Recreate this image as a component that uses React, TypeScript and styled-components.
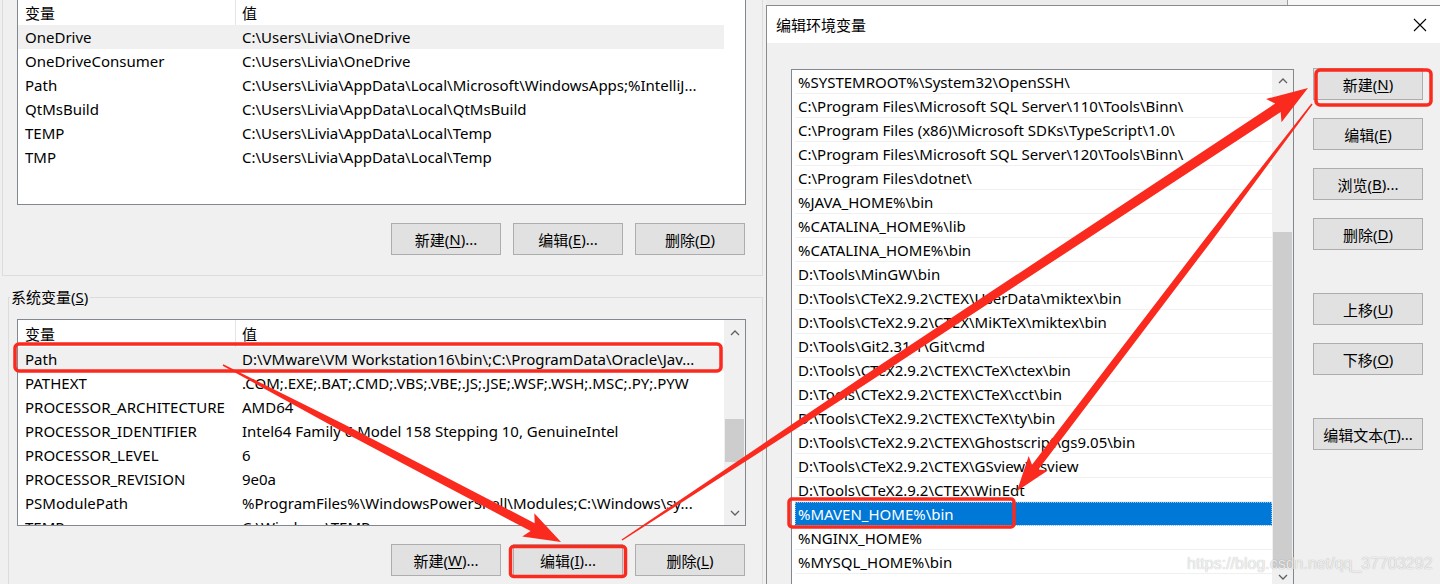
import React from "react";
import styled, { createGlobalStyle } from "styled-components";

const GlobalStyle = createGlobalStyle`
  html, body { margin: 0; padding: 0; background: #f0f0f0; }
  body { font-family: "Noto Sans", "Noto Sans CJK SC", sans-serif; color: #000; }
  * { box-sizing: border-box; }
`;

const Screen = styled.div`
  position: relative;
  width: 1440px;
  height: 584px;
  overflow: hidden;
  display: flex;
  background: #f0f0f0;
  font-size: 15px;
`;

const LeftPane = styled.div`
  width: 766px;
  flex: none;
  display: flex;
  flex-direction: column;
`;

const UserGroup = styled.div`
  margin: -1px 0 0 2px;
  width: 761px;
  border: 1px solid #dcdcdc;
  border-top: none;
  padding: 0 16px 20px 14px;
`;

const SysGroup = styled.div`
  margin: 21px 0 0 8px;
  width: 755px;
  border: 1px solid #dcdcdc;
  border-bottom: none;
  padding: 0 16px 0 8px;
  flex: 1;
`;

const GroupLabel = styled.div`
  width: fit-content;
  margin: -11px 0 0 -7px;
  padding: 0 2px 0 1px;
  line-height: 20px;
  height: 20px;
  background: #f0f0f0;
`;

const ListBox = styled.div<{ $h: number; $mt?: number }>`
  height: ${(p) => p.$h}px;
  margin-top: ${(p) => p.$mt ?? 0}px;
  border: 1px solid #828790;
  background: #fff;
  display: flex;
  overflow: hidden;
`;

const ListBody = styled.div`
  flex: 1;
  min-width: 0;
  overflow: hidden;
`;

const VarHeader = styled.div<{ $h: number }>`
  display: grid;
  grid-template-columns: 218px 1fr;
  height: ${(p) => p.$h}px;
  align-items: stretch;
`;

const HeadCell = styled.div<{ $first?: boolean }>`
  display: flex;
  align-items: center;
  padding-left: ${(p) => (p.$first ? 7 : 6)}px;
  border-right: ${(p) => (p.$first ? "1px solid #e5e5e5" : "none")};
  white-space: nowrap;
`;

const VarRow = styled.div<{ $sel?: boolean }>`
  display: grid;
  grid-template-columns: 218px 1fr;
  height: 24px;
  align-items: center;
  background: ${(p) => (p.$sel ? "#f0f0f0" : "transparent")};
`;

const Cell = styled.div<{ $first?: boolean }>`
  padding-left: ${(p) => (p.$first ? 7 : 6)}px;
  white-space: nowrap;
  overflow: hidden;
`;

const BlankCol = styled.div`
  width: 21px;
  flex: none;
`;

const ScrollCol = styled.div`
  width: 21px;
  flex: none;
  background: #f0f0f0;
  display: flex;
  flex-direction: column;
`;

const ScrollBtn = styled.div<{ $h: number }>`
  height: ${(p) => p.$h}px;
  flex: none;
  display: flex;
  align-items: center;
  justify-content: center;
`;

const Track = styled.div<{ $pt: number }>`
  flex: 1;
  display: flex;
  flex-direction: column;
  padding-top: ${(p) => p.$pt}px;
`;

const Thumb = styled.div<{ $h?: number }>`
  margin: 0 1px;
  background: #cdcdcd;
  ${(p) => (p.$h ? `height: ${p.$h}px;` : "flex: 1;")}
`;

const ButtonRow = styled.div<{ $mt: number }>`
  display: flex;
  justify-content: flex-end;
  gap: 12px;
  margin-top: ${(p) => p.$mt}px;
  padding-right: 1px;
`;

const WinButton = styled.div<{ $mt?: number }>`
  width: 110px;
  height: 32px;
  flex: none;
  margin-top: ${(p) => p.$mt ?? 0}px;
  background: #e1e1e1;
  border: 1px solid #adadad;
  display: flex;
  align-items: center;
  justify-content: center;
  white-space: nowrap;
  font-size: 15px;
  u { text-decoration-thickness: 1px; text-underline-offset: 2px; }
`;

const RightCol = styled.div`
  flex: 1;
  display: flex;
  flex-direction: column;
`;

const TopStrip = styled.div`
  height: 5px;
  flex: none;
  display: flex;
`;

const StripPart = styled.div<{ $w?: number; $line?: boolean }>`
  ${(p) => (p.$w ? `width: ${p.$w}px;` : "flex: 1;")}
  background: ${(p) => (p.$line ? "#f7f7f7" : "#ececec")};
  border-left: ${(p) => (p.$line ? "1px solid #a0a0a0" : "none")};
`;

const Dialog = styled.div`
  flex: 1;
  border-left: 1px solid #8a8a8a;
  border-top: 1px solid #8a8a8a;
  background: #f0f0f0;
  display: flex;
  flex-direction: column;
`;

const TitleBar = styled.div`
  height: 37px;
  flex: none;
  background: #fff;
  display: flex;
  align-items: center;
  justify-content: space-between;
  padding: 0 13px 0 9px;
  font-size: 15px;
`;

const DialogBody = styled.div`
  flex: 1;
  display: flex;
  padding: 25px 0 0 24px;
  gap: 19px;
`;

const PathList = styled.div`
  width: 503px;
  height: 517px;
  margin-top: 1px;
  border: 1px solid #828790;
  background: #fff;
  display: flex;
  flex: none;
`;

const PathBody = styled.div`
  flex: 1;
  min-width: 0;
  padding-left: 3px;
  overflow: hidden;
`;

const PathRow = styled.div<{ $sel?: boolean }>`
  height: 24px;
  display: flex;
  align-items: center;
  padding-left: 3px;
  white-space: nowrap;
  overflow: hidden;
  border-bottom: 1px solid #f0f0f0;
  background: ${(p) => (p.$sel ? "#0078d7" : "#fff")};
  color: ${(p) => (p.$sel ? "#fff" : "#000")};
  outline: ${(p) => (p.$sel ? "1px dotted #8fc3ee" : "none")};
  outline-offset: -1px;
`;

const ButtonCol = styled.div`
  width: 110px;
  flex: none;
  display: flex;
  flex-direction: column;
`;

const Watermark = styled.div`
  position: absolute;
  left: 1187px;
  top: 555px;
  font-family: "Liberation Sans", Arial, sans-serif;
  font-size: 16px;
  color: rgba(255, 255, 255, 0.8);
  text-shadow: 0 0 1px rgba(0, 0, 0, 0.35);
  white-space: nowrap;
  pointer-events: none;
`;

const Overlay = styled.svg`
  position: absolute;
  left: 0;
  top: 0;
  pointer-events: none;
`;

const Chevron = ({ up }: { up?: boolean }) => (
  <svg width="10" height="6" viewBox="0 0 10 6">
    <polyline
      points={up ? "1,5 5,1 9,5" : "1,1 5,5 9,1"}
      fill="none"
      stroke="#606060"
      strokeWidth="1.3"
    />
  </svg>
);

const CloseIcon = () => (
  <svg width="14" height="14" viewBox="0 0 14 14">
    <path d="M1 1 L13 13 M13 1 L1 13" stroke="#000" strokeWidth="1.1" />
  </svg>
);

const userVars: [string, string][] = [
  ["OneDrive", "C:\\Users\\Livia\\OneDrive"],
  ["OneDriveConsumer", "C:\\Users\\Livia\\OneDrive"],
  ["Path", "C:\\Users\\Livia\\AppData\\Local\\Microsoft\\WindowsApps;%IntelliJ..."],
  ["QtMsBuild", "C:\\Users\\Livia\\AppData\\Local\\QtMsBuild"],
  ["TEMP", "C:\\Users\\Livia\\AppData\\Local\\Temp"],
  ["TMP", "C:\\Users\\Livia\\AppData\\Local\\Temp"],
];

const sysVars: [string, string][] = [
  ["Path", "D:\\VMware\\VM Workstation16\\bin\\;C:\\ProgramData\\Oracle\\Jav..."],
  ["PATHEXT", ".COM;.EXE;.BAT;.CMD;.VBS;.VBE;.JS;.JSE;.WSF;.WSH;.MSC;.PY;.PYW"],
  ["PROCESSOR_ARCHITECTURE", "AMD64"],
  ["PROCESSOR_IDENTIFIER", "Intel64 Family 6 Model 158 Stepping 10, GenuineIntel"],
  ["PROCESSOR_LEVEL", "6"],
  ["PROCESSOR_REVISION", "9e0a"],
  ["PSModulePath", "%ProgramFiles%\\WindowsPowerShell\\Modules;C:\\Windows\\sy..."],
  ["TEMP", "C:\\Windows\\TEMP"],
];

const paths = [
  "%SYSTEMROOT%\\System32\\OpenSSH\\",
  "C:\\Program Files\\Microsoft SQL Server\\110\\Tools\\Binn\\",
  "C:\\Program Files (x86)\\Microsoft SDKs\\TypeScript\\1.0\\",
  "C:\\Program Files\\Microsoft SQL Server\\120\\Tools\\Binn\\",
  "C:\\Program Files\\dotnet\\",
  "%JAVA_HOME%\\bin",
  "%CATALINA_HOME%\\lib",
  "%CATALINA_HOME%\\bin",
  "D:\\Tools\\MinGW\\bin",
  "D:\\Tools\\CTeX2.9.2\\CTEX\\UserData\\miktex\\bin",
  "D:\\Tools\\CTeX2.9.2\\CTEX\\MiKTeX\\miktex\\bin",
  "D:\\Tools\\Git2.31.1\\Git\\cmd",
  "D:\\Tools\\CTeX2.9.2\\CTEX\\CTeX\\ctex\\bin",
  "D:\\Tools\\CTeX2.9.2\\CTEX\\CTeX\\cct\\bin",
  "D:\\Tools\\CTeX2.9.2\\CTEX\\CTeX\\ty\\bin",
  "D:\\Tools\\CTeX2.9.2\\CTEX\\Ghostscript\\gs9.05\\bin",
  "D:\\Tools\\CTeX2.9.2\\CTEX\\GSview\\gsview",
  "D:\\Tools\\CTeX2.9.2\\CTEX\\WinEdt",
  "%MAVEN_HOME%\\bin",
  "%NGINX_HOME%",
  "%MYSQL_HOME%\\bin",
  "",
];

function arrowPoints(
  x1: number, y1: number, x2: number, y2: number,
  w0: number, w1: number, hl: number, hw: number
) {
  const dx = x2 - x1, dy = y2 - y1, L = Math.hypot(dx, dy);
  const ux = dx / L, uy = dy / L, nx = -uy, ny = ux;
  const bx = x2 - ux * hl, by = y2 - uy * hl;
  const mx = x1 + dx * 0.35, my = y1 + dy * 0.35;
  const wm = w1 * 0.8;
  const p = (x: number, y: number) => `${x.toFixed(1)},${y.toFixed(1)}`;
  return [
    p(x1 + (nx * w0) / 2, y1 + (ny * w0) / 2),
    p(mx + (nx * wm) / 2, my + (ny * wm) / 2),
    p(bx + (nx * w1) / 2, by + (ny * w1) / 2),
    p(bx + (nx * hw) / 2 - ux * 5, by + (ny * hw) / 2 - uy * 5),
    p(x2, y2),
    p(bx - (nx * hw) / 2 - ux * 5, by - (ny * hw) / 2 - uy * 5),
    p(bx - (nx * w1) / 2, by - (ny * w1) / 2),
    p(mx - (nx * wm) / 2, my - (ny * wm) / 2),
    p(x1 - (nx * w0) / 2, y1 - (ny * w0) / 2),
  ].join(" ");
}

const RED = "#fb2a1e";

export default function App() {
  return (
    <>
      <GlobalStyle />
      <Screen>
        <LeftPane>
          <UserGroup>
            <ListBox $h={206}>
              <ListBody>
                <VarHeader $h={25}>
                  <HeadCell $first>变量</HeadCell>
                  <HeadCell>值</HeadCell>
                </VarHeader>
                {userVars.map(([n, v], i) => (
                  <VarRow key={n + i} $sel={i === 0}>
                    <Cell $first>{n}</Cell>
                    <Cell>{v}</Cell>
                  </VarRow>
                ))}
              </ListBody>
              <BlankCol />
            </ListBox>
            <ButtonRow $mt={18}>
              <WinButton>新建(<u>N</u>)...</WinButton>
              <WinButton>编辑(<u>E</u>)...</WinButton>
              <WinButton>删除(<u>D</u>)</WinButton>
            </ButtonRow>
          </UserGroup>
          <SysGroup>
            <GroupLabel>系统变量(<u>S</u>)</GroupLabel>
            <ListBox $h={207} $mt={12}>
              <ListBody>
                <VarHeader $h={27}>
                  <HeadCell $first>变量</HeadCell>
                  <HeadCell>值</HeadCell>
                </VarHeader>
                {sysVars.map(([n, v], i) => (
                  <VarRow key={n + i} $sel={i === 0}>
                    <Cell $first>{n}</Cell>
                    <Cell>{v}</Cell>
                  </VarRow>
                ))}
              </ListBody>
              <ScrollCol>
                <ScrollBtn $h={26}><Chevron up /></ScrollBtn>
                <Track $pt={73}>
                  <Thumb $h={43} />
                </Track>
                <ScrollBtn $h={24}><Chevron /></ScrollBtn>
              </ScrollCol>
            </ListBox>
            <ButtonRow $mt={18}>
              <WinButton>新建(<u>W</u>)...</WinButton>
              <WinButton>编辑(<u>I</u>)...</WinButton>
              <WinButton>删除(<u>L</u>)</WinButton>
            </ButtonRow>
          </SysGroup>
        </LeftPane>

        <RightCol>
          <TopStrip>
            <StripPart $w={521} />
            <StripPart $line />
          </TopStrip>
          <Dialog>
            <TitleBar>
              <span>编辑环境变量</span>
              <CloseIcon />
            </TitleBar>
            <DialogBody>
              <PathList>
                <PathBody>
                  {paths.map((t, i) => (
                    <PathRow key={i} $sel={i === 18}>{t}</PathRow>
                  ))}
                </PathBody>
                <ScrollCol>
                  <ScrollBtn $h={22}><Chevron up /></ScrollBtn>
                  <Track $pt={140}>
                    <Thumb />
                  </Track>
                  <ScrollBtn $h={17}><Chevron /></ScrollBtn>
                </ScrollCol>
              </PathList>
              <ButtonCol>
                <WinButton>新建(<u>N</u>)</WinButton>
                <WinButton $mt={18}>编辑(<u>E</u>)</WinButton>
                <WinButton $mt={18}>浏览(<u>B</u>)...</WinButton>
                <WinButton $mt={18}>删除(<u>D</u>)</WinButton>
                <WinButton $mt={43}>上移(<u>U</u>)</WinButton>
                <WinButton $mt={18}>下移(<u>O</u>)</WinButton>
                <WinButton $mt={43}>编辑文本(<u>T</u>)...</WinButton>
              </ButtonCol>
            </DialogBody>
          </Dialog>
        </RightCol>

        <Watermark>https://blog.csdn.net/qq_37703292</Watermark>

        <Overlay width="1440" height="584" viewBox="0 0 1440 584">
          <g fill="none" stroke={RED} strokeWidth="3.5">
            <rect x="15" y="344" width="706" height="27" rx="4" />
            <rect x="510.5" y="546.5" width="115" height="30" rx="3" />
            <rect x="1316" y="70" width="115" height="35" rx="4" />
            <rect x="789" y="499" width="225" height="28" rx="3" />
          </g>
          <g fill={RED}>
            <polygon points={arrowPoints(223, 365, 561, 542, 1.5, 9, 32, 26)} />
            <polygon points={arrowPoints(622, 540, 1308, 88, 1.5, 10, 36, 28)} />
            <polygon points={arrowPoints(1312, 104, 1017, 491, 1.5, 8, 30, 24)} />
          </g>
        </Overlay>
      </Screen>
    </>
  );
}
